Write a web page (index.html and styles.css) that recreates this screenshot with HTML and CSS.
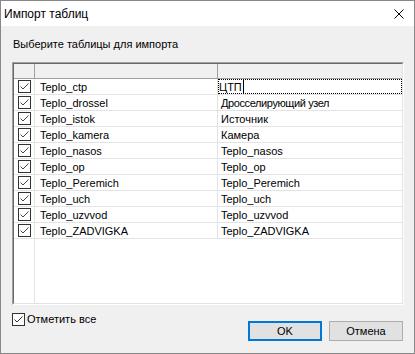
FILE: index.html
```html
<!DOCTYPE html>
<html lang="ru">
<head>
<meta charset="utf-8">
<title>Импорт таблиц</title>
<link rel="stylesheet" href="styles.css">
</head>
<body>
<div class="win">
  <div class="titlebar">
    <span class="title">Импорт таблиц</span>
    <svg class="close" width="10" height="10" viewBox="0 0 10 10"><path d="M0.5 0.5L9.5 9.5M9.5 0.5L0.5 9.5" stroke="#000" stroke-width="1" fill="none"/></svg>
  </div>
  <div class="body">
    <div class="label">Выберите таблицы для импорта</div>
    <div class="grid">
      <div class="inner">
        <div class="row head"><div class="c1"></div><div class="c2"></div><div class="c3"></div></div>
        <div class="row"><div class="c1"><span class="cb"><svg width="11" height="11" viewBox="0 0 11 11"><path d="M1.5 5.5L4 8L9.5 2.5" stroke="#444" stroke-width="1" fill="none"/></svg></span></div><div class="c2">Teplo_ctp</div><div class="c3 edit">ЦТП<span class="caret"></span></div></div>
        <div class="row"><div class="c1"><span class="cb"><svg width="11" height="11" viewBox="0 0 11 11"><path d="M1.5 5.5L4 8L9.5 2.5" stroke="#444" stroke-width="1" fill="none"/></svg></span></div><div class="c2">Teplo_drossel</div><div class="c3 tight">Дросселирующий узел</div></div>
        <div class="row"><div class="c1"><span class="cb"><svg width="11" height="11" viewBox="0 0 11 11"><path d="M1.5 5.5L4 8L9.5 2.5" stroke="#444" stroke-width="1" fill="none"/></svg></span></div><div class="c2">Teplo_istok</div><div class="c3">Источник</div></div>
        <div class="row"><div class="c1"><span class="cb"><svg width="11" height="11" viewBox="0 0 11 11"><path d="M1.5 5.5L4 8L9.5 2.5" stroke="#444" stroke-width="1" fill="none"/></svg></span></div><div class="c2">Teplo_kamera</div><div class="c3">Камера</div></div>
        <div class="row"><div class="c1"><span class="cb"><svg width="11" height="11" viewBox="0 0 11 11"><path d="M1.5 5.5L4 8L9.5 2.5" stroke="#444" stroke-width="1" fill="none"/></svg></span></div><div class="c2">Teplo_nasos</div><div class="c3">Teplo_nasos</div></div>
        <div class="row"><div class="c1"><span class="cb"><svg width="11" height="11" viewBox="0 0 11 11"><path d="M1.5 5.5L4 8L9.5 2.5" stroke="#444" stroke-width="1" fill="none"/></svg></span></div><div class="c2">Teplo_op</div><div class="c3">Teplo_op</div></div>
        <div class="row"><div class="c1"><span class="cb"><svg width="11" height="11" viewBox="0 0 11 11"><path d="M1.5 5.5L4 8L9.5 2.5" stroke="#444" stroke-width="1" fill="none"/></svg></span></div><div class="c2">Teplo_Peremich</div><div class="c3">Teplo_Peremich</div></div>
        <div class="row"><div class="c1"><span class="cb"><svg width="11" height="11" viewBox="0 0 11 11"><path d="M1.5 5.5L4 8L9.5 2.5" stroke="#444" stroke-width="1" fill="none"/></svg></span></div><div class="c2">Teplo_uch</div><div class="c3">Teplo_uch</div></div>
        <div class="row"><div class="c1"><span class="cb"><svg width="11" height="11" viewBox="0 0 11 11"><path d="M1.5 5.5L4 8L9.5 2.5" stroke="#444" stroke-width="1" fill="none"/></svg></span></div><div class="c2">Teplo_uzvvod</div><div class="c3">Teplo_uzvvod</div></div>
        <div class="row"><div class="c1"><span class="cb"><svg width="11" height="11" viewBox="0 0 11 11"><path d="M1.5 5.5L4 8L9.5 2.5" stroke="#444" stroke-width="1" fill="none"/></svg></span></div><div class="c2">Teplo_ZADVIGKA</div><div class="c3">Teplo_ZADVIGKA</div></div>
        <div class="filler"><div class="c1"></div></div>
      </div>
    </div>
    <div class="footer">
      <label class="chkall"><span class="cb"><svg width="11" height="11" viewBox="0 0 11 11"><path d="M1.5 5.5L4 8L9.5 2.5" stroke="#333" stroke-width="1" fill="none"/></svg></span><span>Отметить все</span></label>
      <div class="buttons">
        <button class="btn default">OK</button>
        <button class="btn">Отмена</button>
      </div>
    </div>
  </div>
</div>
</body>
</html>
```
FILE: styles.css
```css
html, body {
  margin: 0;
  padding: 0;
  background: #f0f0f0;
}
body {
  font-family: "Liberation Sans", Arial, sans-serif;
  font-size: 11px;
  color: #000;
}
.win {
  width: 415px;
  height: 354px;
  box-sizing: border-box;
  border: 1px solid #888;
  background: #f0f0f0;
  display: flex;
  flex-direction: column;
}
.titlebar {
  height: 25px;
  flex: none;
  background: #fff;
  display: flex;
  align-items: center;
  padding-left: 3px;
}
.title {
  font-size: 12px;
  line-height: 15px;
  padding-top: 2px;
}
.close {
  margin-left: auto;
  margin-right: 10px;
  display: block;
}
.body {
  flex: 1;
  padding: 11px 10px 0 11px;
  display: flex;
  flex-direction: column;
}
.label {
  line-height: 15px;
  height: 15px;
  padding-left: 1px;
  font-size: 11px;
}
.grid {
  margin-top: 10px;
  height: 243px;
  box-sizing: border-box;
  border-style: solid;
  border-width: 1px;
  border-color: #a0a0a0 #fff #fff #a0a0a0;
  background: #fff;
  flex: none;
}
.inner {
  height: 100%;
  box-sizing: border-box;
  border-style: solid;
  border-width: 1px;
  border-color: #696969 #e3e3e3 #e3e3e3 #696969;
  display: flex;
  flex-direction: column;
  font-size: 11px;
}
.row {
  display: flex;
  height: 16px;
  box-sizing: border-box;
  border-bottom: 1px solid #e3e3e3;
  flex: none;
}
.row.head {
  height: 15px;
  background: #f0f0f0;
  border-bottom: 1px solid #a0a0a0;
}
.c1, .c2, .c3 {
  box-sizing: border-box;
  line-height: 15px;
  white-space: nowrap;
}
.c1 {
  width: 21px;
  border-right: 1px solid #e3e3e3;
  display: flex;
  align-items: center;
  justify-content: center;
}
.c2 {
  width: 183px;
  border-right: 1px solid #e3e3e3;
  padding-left: 5px;
  padding-top: 1px;
}
.c3 {
  width: 184px;
  padding-left: 3px;
  padding-top: 1px;
}
.c3.tight {
  letter-spacing: -0.4px;
}
.head .c1, .head .c2 {
  border-right-color: #a0a0a0;
}
.c3.edit {
  outline: 1px dotted #000;
  outline-offset: -1px;
  padding-left: 1px;
  display: flex;
  align-items: flex-start;
}
.caret {
  display: inline-block;
  width: 1px;
  height: 13px;
  background: #000;
  margin-left: 1px;
}
.cb {
  width: 13px;
  height: 13px;
  box-sizing: border-box;
  border: 1px solid #333;
  background: #fff;
  display: flex;
  align-items: center;
  justify-content: center;
  flex: none;
}
.cb svg {
  display: block;
}
.filler {
  flex: 1;
  display: flex;
}
.filler .c1 {
  height: 100%;
}
.footer {
  display: flex;
  align-items: flex-start;
  flex: 1;
}
.chkall {
  margin-top: 7px;
  display: flex;
  align-items: center;
  gap: 2px;
  line-height: 15px;
  font-size: 11px;
}
.buttons {
  margin-left: auto;
  margin-right: 1px;
  margin-top: 16px;
  display: flex;
  gap: 7px;
}
.btn {
  width: 74px;
  height: 20px;
  box-sizing: border-box;
  font-family: "Liberation Sans", Arial, sans-serif;
  font-size: 11px;
  color: #000;
  background: #e1e1e1;
  border: 1px solid #adadad;
  padding: 0;
  margin: 0;
  line-height: 16px;
}
.btn.default {
  border: 2px solid #0078d7;
}
```
